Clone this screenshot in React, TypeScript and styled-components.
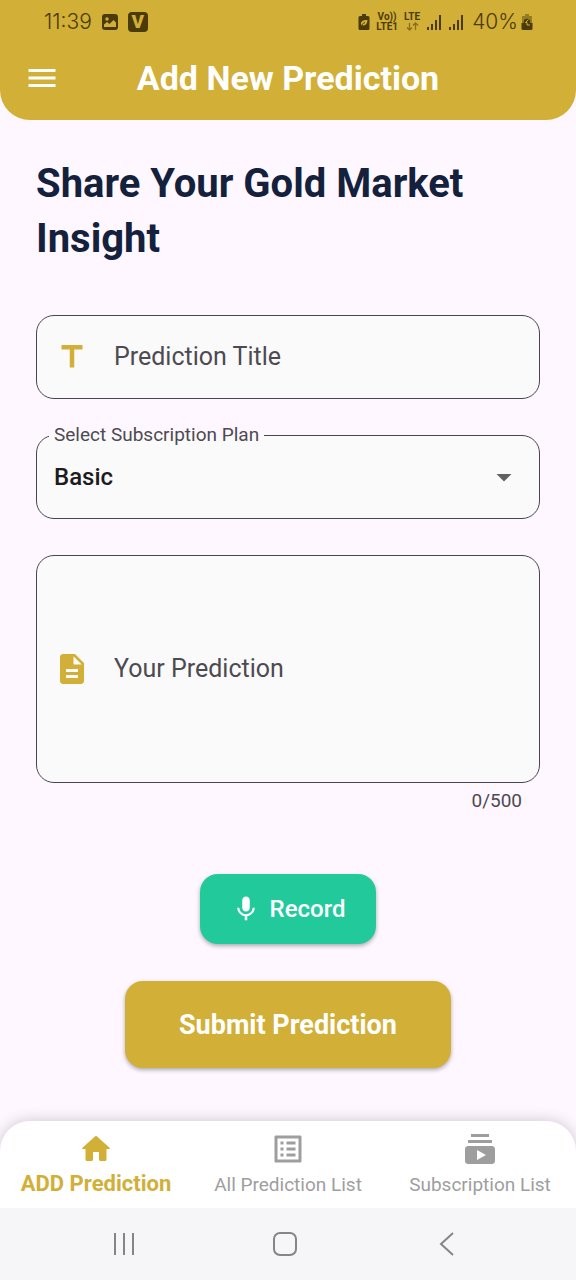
import React, { useState } from 'react';
import styled, { createGlobalStyle } from 'styled-components';
import {
  MdArrowDropDown,
  MdDescription,
  MdListAlt,
  MdMenu,
  MdSubscriptions,
  MdTitle,
} from 'react-icons/md';

const colors = {
  gold: '#d2af37',
  page: '#fef7ff',
  field: '#fafafa',
  outline: '#49454f',
  muted: '#4d4a52',
  heading: '#14213d',
  green: '#22ca9b',
  inactive: '#9e9e9e',
  status: '#4b3b08',
};

const GlobalStyle = createGlobalStyle`
  *, *::before, *::after { box-sizing: border-box; }
  body {
    margin: 0;
    background: ${colors.page};
    font-family: Roboto, "Liberation Sans", sans-serif;
  }
  button, input, select, textarea { font-family: inherit; }
`;

const Screen = styled.div`
  display: flex;
  flex-direction: column;
  min-height: 100vh;
`;

const Header = styled.header`
  background: ${colors.gold};
  border-radius: 0 0 30px 30px;
`;

const StatusBar = styled.div`
  display: flex;
  align-items: center;
  justify-content: space-between;
  height: 43px;
  padding: 0 43px 0 44px;
  color: ${colors.status};
`;

const StatusGroup = styled.div<{ $gap: number }>`
  display: flex;
  align-items: center;
  gap: ${({ $gap }) => $gap}px;
`;

const StatusText = styled.span`
  font-family: Inter, Roboto, sans-serif;
  font-size: 21px;
  font-weight: 300;
  line-height: 24px;
`;

const Percent = styled(StatusText)`
  display: flex;
  align-items: center;
  gap: 3px;
  margin-left: 2px;
`;

const VBadge = styled.span`
  width: 20px;
  height: 20px;
  border-radius: 4px;
  background: ${colors.status};
  color: ${colors.gold};
  font-size: 19px;
  font-weight: 900;
  line-height: 20px;
  text-align: center;
`;

const Network = styled.span`
  display: flex;
  flex-direction: column;
  align-items: center;
  font-size: 10px;
  font-weight: 700;
  line-height: 10px;
`;

const TitleBar = styled.div`
  display: grid;
  grid-template-columns: 36px 1fr 36px;
  align-items: center;
  height: 77px;
  padding: 0 24px 8px;
`;

const MenuButton = styled.button`
  display: flex;
  padding: 0;
  border: 0;
  background: none;
  color: #fff;
  cursor: pointer;
`;

const Title = styled.h1`
  margin: 0;
  color: #fff;
  font-size: 34px;
  font-weight: 700;
  line-height: 40px;
  text-align: center;
`;

const Form = styled.form`
  display: flex;
  flex: 1;
  flex-direction: column;
  padding: 36px 36px 53px;
`;

const Heading = styled.h2`
  margin: 0 0 49px;
  color: ${colors.heading};
  font-size: 40px;
  font-weight: 700;
  line-height: 55px;
`;

const Field = styled.label<{ $height: number }>`
  display: flex;
  align-items: center;
  gap: 24px;
  min-height: ${({ $height }) => $height}px;
  padding: 0 17px;
  border: 1px solid ${colors.outline};
  border-radius: 18px;
  background: ${colors.field};
  color: ${colors.gold};

  svg { flex: none; }
`;

const TextInput = styled.input`
  flex: 1;
  min-width: 0;
  padding: 0;
  border: 0;
  outline: 0;
  background: none;
  color: #1d1b20;
  font-size: 25px;
  line-height: 36px;

  &::placeholder { color: ${colors.muted}; opacity: 1; }
`;

const TextArea = styled.textarea`
  flex: 1;
  min-width: 0;
  max-height: 216px;
  padding: 0;
  border: 0;
  outline: 0;
  resize: none;
  field-sizing: content;
  background: none;
  color: #1d1b20;
  font-size: 25px;
  line-height: 36px;

  &::placeholder { color: ${colors.muted}; opacity: 1; }
`;

const Outlined = styled.fieldset`
  min-width: 0;
  height: 94px;
  margin: 26px 0 36px;
  padding: 0 12px;
  border: 1px solid ${colors.outline};
  border-radius: 18px;
  background: ${colors.field};
`;

const Legend = styled.legend`
  padding: 0 5px;
  color: ${colors.muted};
  font-size: 19px;
  line-height: 20px;
`;

const SelectRow = styled.div`
  display: grid;
  align-items: center;
  padding-left: 5px;

  > * { grid-area: 1 / 1; }

  svg {
    justify-self: end;
    margin-right: 5px;
    color: #616161;
    pointer-events: none;
  }
`;

const Select = styled.select`
  width: 100%;
  height: 64px;
  padding: 0;
  border: 0;
  outline: 0;
  appearance: none;
  background: none;
  color: #1d1b20;
  font-size: 24px;
  font-weight: 500;
`;

const Counter = styled.output`
  align-self: flex-end;
  margin: 8px 18px 63px 0;
  color: ${colors.muted};
  font-size: 19px;
  line-height: 20px;
`;

const ActionButton = styled.button<{ $variant: 'record' | 'submit' }>`
  display: flex;
  align-items: center;
  align-self: center;
  justify-content: center;
  gap: 9px;
  min-width: ${({ $variant }) => ($variant === 'record' ? 176 : 326)}px;
  height: ${({ $variant }) => ($variant === 'record' ? 70 : 87)}px;
  margin-bottom: ${({ $variant }) => ($variant === 'record' ? 37 : 0)}px;
  padding: 0 30px;
  border: 0;
  border-radius: 18px;
  background: ${({ $variant }) => ($variant === 'record' ? colors.green : colors.gold)};
  box-shadow: 0 2px 4px rgba(0, 0, 0, 0.32);
  color: #fff;
  font-size: ${({ $variant }) => ($variant === 'record' ? 24 : 27)}px;
  font-weight: ${({ $variant }) => ($variant === 'record' ? 500 : 700)};
  cursor: pointer;
`;

const TabBar = styled.nav`
  display: grid;
  grid-template-columns: repeat(3, 1fr);
  padding: 10px 0 11px;
  border-radius: 30px 30px 0 0;
  background: #fff;
  box-shadow: 0 0 15px rgba(0, 0, 0, 0.2);
`;

const Tab = styled.a<{ $active?: boolean }>`
  display: flex;
  flex-direction: column;
  align-items: center;
  gap: 6px;
  color: ${({ $active }) => ($active ? colors.gold : colors.inactive)};
  font-size: ${({ $active }) => ($active ? 22 : 19)}px;
  font-weight: ${({ $active }) => ($active ? 700 : 400)};
  line-height: ${({ $active }) => ($active ? 22 : 24)}px;
  text-decoration: none;
  white-space: nowrap;
`;

const SystemBar = styled.div`
  position: relative;
  display: grid;
  grid-template-columns: repeat(3, 1fr);
  height: 72px;
  padding: 0 48px 0 43px;
  background: #f6f6f8;
`;

const SystemButton = styled.button`
  display: flex;
  align-items: center;
  justify-content: center;
  padding: 0;
  border: 0;
  background: none;
  color: #858587;
`;

const PictureIcon = () => (
  <svg width="18" height="18" viewBox="0 0 18 18" aria-hidden="true">
    <rect x="1" y="1" width="16" height="16" rx="3" fill={colors.status} />
    <circle cx="6" cy="6" r="1.7" fill={colors.gold} />
    <path d="M3 14v-2.500l3-2.500 2.500 2 4-4 2.500 2.500V14z" fill={colors.gold} />
  </svg>
);

const BatterySaverIcon = () => (
  <svg width="12" height="18" viewBox="0 0 12 18" aria-hidden="true">
    <path d="M4 1h4v2h2q1.500 0 1.500 1.500v11Q11.500 17 10 17H2Q.5 17 .5 15.500v-11Q.5 3 2 3h2z" fill={colors.status} />
    <path d="M3 12c-.5-4 2-5 6.500-5-.3 4-2 6-5 5.300M3 13.500c.8-2 2-3 4-4" fill={colors.gold} />
    <path d="M2.500 14c1-2.500 2.500-3.600 4.500-4.500" fill="none" stroke={colors.status} />
  </svg>
);

const ChargeIcon = () => (
  <svg width="12" height="18" viewBox="0 0 12 18" aria-hidden="true">
    <path d="M4 1h4v2h3v7H1V3h3z" fill={colors.status} opacity=".45" />
    <path d="M.5 10h11v5.500Q11.500 17 10 17H2Q.5 17 .5 15.500z" fill={colors.status} />
    <circle cx="6" cy="9" r="3.200" fill={colors.status} />
    <path d="M7.500 6.500 4.500 9.500h1.500v2.500h3" fill="none" stroke={colors.gold} />
  </svg>
);

const SignalIcon = () => (
  <svg width="16" height="18" viewBox="0 0 16 18" stroke={colors.status} strokeWidth="2" aria-hidden="true">
    <path d="M2 14v3M6 11v6M10 7v10M14 2v15" />
  </svg>
);

const DataArrows = () => (
  <svg width="13" height="9" viewBox="0 0 13 9" fill="none" stroke={colors.status} strokeWidth="1.300" opacity=".55" aria-hidden="true">
    <path d="M3.500 1v7M1 5.500 3.500 8 6 5.500M9.500 8V1M7 3.500 9.500 1 12 3.500" />
  </svg>
);

const MicIcon = () => (
  <svg width="30" height="30" viewBox="0 0 24 24" fill="currentColor" aria-hidden="true">
    <path d="M12 14c1.660 0 2.990-1.340 2.990-3L15 5c0-1.660-1.340-3-3-3S9 3.340 9 5v6c0 1.660 1.340 3 3 3zm5.300-3c0 3-2.540 5.100-5.300 5.100S6.700 14 6.700 11H5c0 3.410 2.720 6.230 6 6.720V21h2v-3.280c3.280-.48 6-3.300 6-6.720h-1.700z" />
  </svg>
);

const HomeIcon = () => (
  <svg width="36" height="36" viewBox="0 0 24 24" fill="currentColor" aria-hidden="true">
    <path d="M10 19v-5h4v5c0 .55.45 1 1 1h3c.55 0 1-.45 1-1v-7h1.700c.46 0 .68-.57.33-.87L12.670 3.600c-.38-.34-.96-.34-1.340 0l-8.360 7.530c-.34.3-.13.87.33.87H5v7c0 .55.45 1 1 1h3c.55 0 1-.45 1-1z" />
  </svg>
);

export default function App() {
  const [title, setTitle] = useState('');
  const [prediction, setPrediction] = useState('');

  return (
    <>
      <GlobalStyle />
      <Screen>
        <Header>
          <StatusBar>
            <StatusGroup $gap={9}>
              <StatusText>11:39</StatusText>
              <PictureIcon />
              <VBadge>V</VBadge>
            </StatusGroup>
            <StatusGroup $gap={6}>
              <BatterySaverIcon />
              <Network>
                <span>Vo))</span>
                <span>LTE1</span>
              </Network>
              <Network>
                <span>LTE</span>
                <DataArrows />
              </Network>
              <SignalIcon />
              <SignalIcon />
              <Percent>
                40%
                <ChargeIcon />
              </Percent>
            </StatusGroup>
          </StatusBar>
          <TitleBar>
            <MenuButton type="button" aria-label="Open menu">
              <MdMenu size={36} />
            </MenuButton>
            <Title>Add New Prediction</Title>
          </TitleBar>
        </Header>

        <Form onSubmit={(event) => event.preventDefault()}>
          <Heading>Share Your Gold Market Insight</Heading>

          <Field $height={84}>
            <MdTitle size={36} />
            <TextInput
              aria-label="Prediction Title"
              placeholder="Prediction Title"
              value={title}
              onChange={(event) => setTitle(event.target.value)}
            />
          </Field>

          <Outlined>
            <Legend>
              <label htmlFor="plan">Select Subscription Plan</label>
            </Legend>
            <SelectRow>
              <Select id="plan" defaultValue="Basic">
                <option>Basic</option>
              </Select>
              <MdArrowDropDown size={36} />
            </SelectRow>
          </Outlined>

          <Field $height={228}>
            <MdDescription size={36} />
            <TextArea
              rows={1}
              maxLength={500}
              aria-label="Your Prediction"
              placeholder="Your Prediction"
              value={prediction}
              onChange={(event) => setPrediction(event.target.value)}
            />
          </Field>
          <Counter>{prediction.length}/500</Counter>

          <ActionButton type="button" $variant="record">
            <MicIcon />
            Record
          </ActionButton>
          <ActionButton type="submit" $variant="submit">
            Submit Prediction
          </ActionButton>
        </Form>

        <TabBar>
          <Tab href="#add" $active>
            <HomeIcon />
            ADD Prediction
          </Tab>
          <Tab href="#predictions">
            <MdListAlt size={36} />
            All Prediction List
          </Tab>
          <Tab href="#subscriptions">
            <MdSubscriptions size={36} />
            Subscription List
          </Tab>
        </TabBar>

        <SystemBar>
          <SystemButton type="button" aria-label="Recent apps">
            <svg width="24" height="24" viewBox="0 0 24 24" fill="none" stroke="currentColor" strokeWidth="2">
              <path d="M3 1v22M12 1v22M21 1v22" />
            </svg>
          </SystemButton>
          <SystemButton type="button" aria-label="Home">
            <svg width="24" height="24" viewBox="0 0 24 24" fill="none" stroke="currentColor" strokeWidth="2">
              <rect x="1" y="1" width="22" height="22" rx="6" />
            </svg>
          </SystemButton>
          <SystemButton type="button" aria-label="Back">
            <svg width="24" height="24" viewBox="0 0 24 24" fill="none" stroke="currentColor" strokeWidth="2">
              <path d="M18 1 6 12l12 11" />
            </svg>
          </SystemButton>
        </SystemBar>
      </Screen>
    </>
  );
}
